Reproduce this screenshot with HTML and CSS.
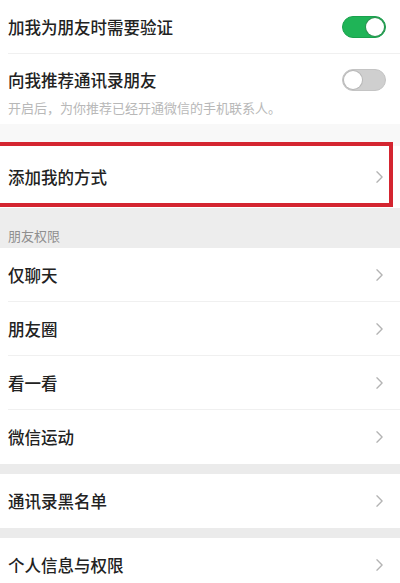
FILE: index.html
```html
<!DOCTYPE html>
<html lang="zh-CN">
<head>
<meta charset="utf-8">
<link rel="stylesheet" href="styles.css">
</head>
<body>
<div class="page">
  <div class="cell first">
    <span class="label">加我为朋友时需要验证</span>
    <span class="switch on"><span class="knob"></span></span>
  </div>
  <div class="cell-group">
    <div class="cell-row">
      <span class="label">向我推荐通讯录朋友</span>
      <span class="switch off"><span class="knob"></span></span>
    </div>
    <div class="hint">开启后，为你推荐已经开通微信的手机联系人。</div>
  </div>
  <div class="gap light"></div>
  <div class="cell tall">
    <span class="label">添加我的方式</span>
    <svg class="chev" viewBox="0 0 8 14" width="8" height="14"><polyline points="1,1 7,7 1,13" /></svg>
    <div class="highlight"></div>
  </div>
  <div class="section-title">朋友权限</div>
  <div class="cell line">
    <span class="label">仅聊天</span>
    <svg class="chev" viewBox="0 0 8 14" width="8" height="14"><polyline points="1,1 7,7 1,13" /></svg>
  </div>
  <div class="cell line">
    <span class="label">朋友圈</span>
    <svg class="chev" viewBox="0 0 8 14" width="8" height="14"><polyline points="1,1 7,7 1,13" /></svg>
  </div>
  <div class="cell line">
    <span class="label">看一看</span>
    <svg class="chev" viewBox="0 0 8 14" width="8" height="14"><polyline points="1,1 7,7 1,13" /></svg>
  </div>
  <div class="cell">
    <span class="label">微信运动</span>
    <svg class="chev" viewBox="0 0 8 14" width="8" height="14"><polyline points="1,1 7,7 1,13" /></svg>
  </div>
  <div class="gap"></div>
  <div class="cell">
    <span class="label">通讯录黑名单</span>
    <svg class="chev" viewBox="0 0 8 14" width="8" height="14"><polyline points="1,1 7,7 1,13" /></svg>
  </div>
  <div class="gap"></div>
  <div class="cell">
    <span class="label">个人信息与权限</span>
    <svg class="chev" viewBox="0 0 8 14" width="8" height="14"><polyline points="1,1 7,7 1,13" /></svg>
  </div>
</div>
</body>
</html>
```
FILE: styles.css
```css
html, body {
  margin: 0;
  padding: 0;
  background: #ededed;
}
body {
  width: 400px;
  height: 583px;
  overflow: hidden;
  font-family: "Noto Sans CJK SC", "Noto Sans", sans-serif;
  color: #1c1c1c;
}
.page {
  display: flex;
  flex-direction: column;
  position: relative;
}
.cell {
  position: relative;
  height: 54px;
  background: #fff;
  display: flex;
  align-items: center;
  justify-content: space-between;
  padding: 0 17px 0 8px;
  box-sizing: border-box;
}
.cell.first {
  padding-right: 14px;
}
.cell.first::after,
.cell.line::after {
  content: "";
  position: absolute;
  left: 8px;
  right: 0;
  bottom: 0;
  height: 1px;
  background: #f0f0f0;
}
.cell.tall {
  height: 62px;
}
.label {
  font-size: 16.5px;
  line-height: 22px;
  font-weight: 500;
  color: #222;
}
.cell-group {
  background: #fff;
  padding: 15px 14px 7px 8px;
}
.cell-row {
  display: flex;
  align-items: center;
  justify-content: space-between;
  height: 22px;
}
.hint {
  margin-top: 8px;
  font-size: 13px;
  line-height: 18px;
  color: #b8b8b8;
}
.switch {
  position: relative;
  width: 44px;
  height: 22px;
  border-radius: 11px;
  box-sizing: border-box;
}
.switch.on {
  background: #1fb457;
  border: 1px solid #1aa14d;
}
.switch.off {
  background: #cfcfcf;
  border: 1px solid #c4c4c4;
}
.knob {
  position: absolute;
  top: 1px;
  width: 18px;
  height: 18px;
  border-radius: 50%;
  background: #fff;
}
.switch.on .knob {
  right: 1px;
  box-shadow: 0 0 0 1px #2f8f52;
}
.switch.off .knob {
  left: 1px;
  box-shadow: 0 0 0 1px #b8b8b8;
}
.chev {
  width: 7px;
  height: 12px;
}
.chev polyline {
  fill: none;
  stroke: #b4b4b4;
  stroke-width: 1.6;
  stroke-linecap: round;
  stroke-linejoin: round;
}
.gap {
  height: 10px;
  background: #ebebeb;
}
.gap.light {
  height: 22px;
  background: #f8f8f8;
}
.section-title {
  height: 40px;
  box-sizing: border-box;
  padding: 20px 0 0 8px;
  font-size: 13px;
  line-height: 16px;
  color: #8f8f8f;
  background: #ededed;
}
.highlight {
  position: absolute;
  left: -10px;
  top: -4px;
  width: 403px;
  height: 65px;
  box-sizing: border-box;
  border: 4.5px solid #d42530;
  pointer-events: none;
}
```
